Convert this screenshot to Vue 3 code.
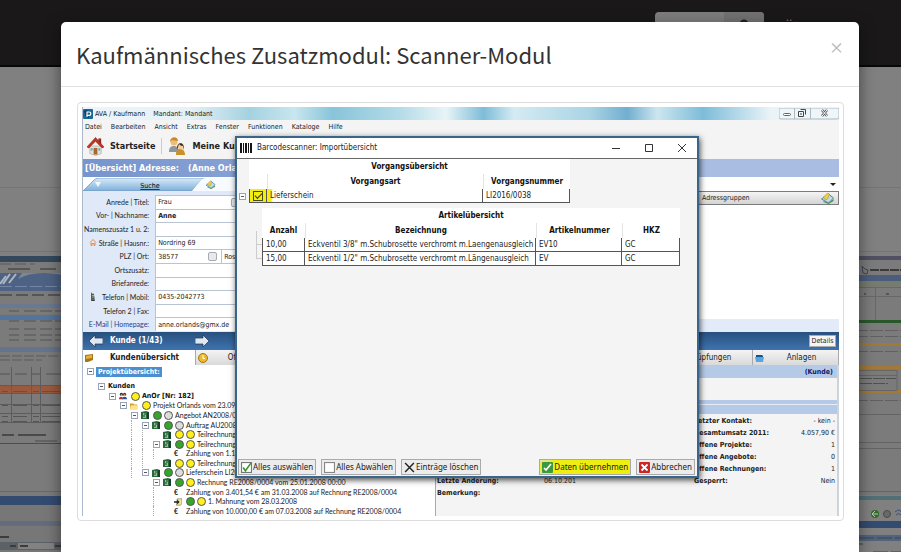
<script setup>
const menu = ['Datei', 'Bearbeiten', 'Ansicht', 'Extras', 'Fenster', 'Funktionen', 'Kataloge', 'Hilfe']

const fields = [
  { id: 'anrede', label: 'Anrede | Titel:', value: 'Frau', pick: true },
  { id: 'name', label: 'Vor- | Nachname:', value: 'Anne', strong: true },
  { id: 'zusatz', label: 'Namenszusatz 1 u. 2:', value: '' },
  { id: 'strasse', label: 'Straße | Hausnr.:', value: 'Nordring 69', icon: 'i-home' },
  { id: 'plz', label: 'PLZ | Ort:', value: '38577', city: 'Rosenheim' },
  { id: 'ort', label: 'Ortszusatz:', value: '' },
  { id: 'brief', label: 'Briefanrede:', value: '' },
  { id: 'tel', label: 'Telefon | Mobil:', value: '0435-2042773', icon: 'i-phone' },
  { id: 'tel2', label: 'Telefon 2 | Fax:', value: '' },
  { id: 'mail', label: 'E-Mail | Homepage:', value: 'anne.orlands@gmx.de', link: true },
]

const tree = [
  { level: 1, toggle: true, text: 'Kunden', bold: true, guides: [] },
  { level: 2, toggle: true, icon: 'i-people', dots: ['yellow'], text: 'AnOr [Nr: 182]', bold: true, guides: [] },
  { level: 3, toggle: true, icon: 'i-folder', dots: ['yellow'], text: 'Projekt Orlands vom 23.09.2008', guides: [] },
  { level: 4, toggle: true, icon: 'i-doc', dots: ['green', 'gray'], text: 'Angebot AN2008/0004', guides: [] },
  { level: 5, toggle: true, icon: 'i-doc', dots: ['green', 'gray'], text: 'Auftrag AU2008/0004', guides: [] },
  { level: 6, icon: 'i-doc', dots: ['yellow', 'yellow'], text: 'Teilrechnung', guides: [6] },
  { level: 6, toggle: true, icon: 'i-doc', dots: ['green', 'yellow'], text: 'Teilrechnung', guides: [6] },
  { level: 7, euro: true, text: 'Zahlung von 1.100,00 €', guides: [6, 7] },
  { level: 6, icon: 'i-doc', dots: ['yellow', 'yellow'], text: 'Teilrechnung', guides: [6] },
  { level: 5, toggle: true, icon: 'i-doc', dots: ['green', 'gray'], text: 'Lieferschein LI2008/0004', guides: [] },
  { level: 6, toggle: true, icon: 'i-doc', dots: ['green', 'yellow'], text: 'Rechnung RE2008/0004 vom 25.01.2008 00:00', guides: [] },
  { level: 7, euro: true, text: 'Zahlung von 3.401,54 € am 31.03.2008 auf Rechnung RE2008/0004', guides: [7] },
  { level: 7, icon: 'i-note', dots: ['green', 'yellow'], text: '1. Mahnung vom 28.03.2008', guides: [7] },
  { level: 7, euro: true, text: 'Zahlung von 10.000,00 € am 07.03.2008 auf Rechnung RE2008/0004', guides: [7] },
]
for (const row of tree) {
  if (row.level >= 5 && tree.indexOf(row) < 10) row.guides.push(5)
}

const facts = [
  ['Letzter Kontakt:', '- kein -'],
  ['Gesamtumsatz 2011:', '4.057,90 €'],
  ['Offene Projekte:', '1'],
  ['Offene Angebote:', '0'],
  ['Offene Rechnungen:', '1'],
  ['Gesperrt:', 'Nein'],
]

const articles = [
  ['10,00', 'Eckventil 3/8" m.Schubrosette verchromt m.Laengenausgleich', 'EV10', 'GC'],
  ['15,00', 'Eckventil 1/2" m.Schubrosette verchromt m.Längenausgleich', 'EV', 'GC'],
]

const leftFigures = [309, 319, 327, 333, 338]
const leftLines = [390, 404, 415, 420]
</script>

<template>
  <div class="page">
    <svg class="defs" aria-hidden="true">
      <symbol id="i-logo" viewBox="0 0 10 10">
        <rect width="10" height="10" rx="1" fill="#176a98" />
        <path d="M1 2l3-1 2 8-3-1z" fill="#0c3d63" />
        <path d="M4 8V3h2.2a1.6 1.6 0 0 1 0 3.300H4" fill="none" stroke="#fff" stroke-width="1.200" />
      </symbol>
      <symbol id="i-house" viewBox="0 0 18 20">
        <path d="M3 10h12v8l-6 2-6-2z" fill="#e9e4dc" stroke="#999" stroke-width=".6" />
        <path d="M12 2h3v6h-3z" fill="#8d3326" />
        <path d="M9 1L0 11l2 1 7-7 7 7 2-1z" fill="#c8321f" stroke="#7d1c12" stroke-width=".6" />
        <path d="M7 12h4v7H7z" fill="#a8672c" />
        <path d="M12 12h2v3h-2zM4 12h2v3H4z" fill="#7fa8c9" />
      </symbol>
      <symbol id="i-users" viewBox="0 0 18 18">
        <path d="M1 15c0-5 2-6 5-6s4 2 4 6z" fill="#8f979e" />
        <circle cx="6" cy="5" r="3.500" fill="#f0bd79" />
        <path d="M2 5c0-6 8-6 8-1-3 0-5-1-6-1z" fill="#c98b25" />
        <path d="M8 18c0-5 1-6 4-6s5 2 5 6z" fill="#c9902c" />
        <circle cx="12.500" cy="9" r="3.200" fill="#f4cf9e" />
        <path d="M9 13c-1-9 8-9 7 0l-1-4c-2 0-3-1-4-2z" fill="#3a2a1c" />
      </symbol>
      <symbol id="i-home" viewBox="0 0 8 8">
        <path d="M1 4l3-3 3 3M2 4v3h1V5h2v2h1V4" fill="none" stroke="#e58a4c" stroke-width="1" />
      </symbol>
      <symbol id="i-phone" viewBox="0 0 8 10">
        <path d="M2 0l1 2h2l1 8H2z" fill="#303c36" />
        <path d="M3 3h2v2H3z" fill="#a4cf8a" />
        <path d="M3 6h2M3 8h2" stroke="#ccc" stroke-width=".7" />
      </symbol>
      <symbol id="i-edit" viewBox="0 0 14 12">
        <path d="M1 7l7-5 5 4-5 5z" fill="#bedbe6" stroke="#4b8a9d" />
        <path d="M3 9l5 2 5-4v2l-5 3-5-2z" fill="#4e8b4c" />
        <path d="M3 5l4-4 2 1-2 5-2 1z" fill="#f3cb4a" stroke="#9d8a35" stroke-width=".5" />
      </symbol>
      <symbol id="i-people" viewBox="0 0 10 8">
        <circle cx="3" cy="2" r="2" fill="#342518" />
        <circle cx="7" cy="2" r="2" fill="#542f16" />
        <circle cx="3" cy="3" r="1.200" fill="#efae6c" />
        <circle cx="7" cy="3" r="1.200" fill="#efae6c" />
        <path d="M0 8c0-4 5-4 5 0z" fill="#c32d2a" />
        <path d="M4 8c0-4 6-4 6 0z" fill="#2b4e9d" />
      </symbol>
      <symbol id="i-folder" viewBox="0 0 10 8">
        <path d="M0 1h4l1 1h4v6H0z" fill="#cf9c2d" />
        <path d="M1 3h9l-1 5H0z" fill="#ffe48a" />
      </symbol>
      <symbol id="i-doc" viewBox="0 0 8 8">
        <path d="M0 1l5-1 3 1v7H0z" fill="#286a3c" />
        <path d="M2 2l3 0v5H2z" fill="#97bf8d" />
        <path d="M6 1h2v7H6z" fill="#183f2c" />
        <path d="M3 3h2M2 5h2" stroke="#17412a" />
      </symbol>
      <symbol id="i-note" viewBox="0 0 10 8">
        <path d="M4 0h6v6L8 8H3z" fill="#eee9a0" stroke="#675f36" stroke-width=".7" />
        <path d="M0 3h4V1l3 3-3 3V5H0z" fill="#222" />
      </symbol>
      <symbol id="i-arrow" viewBox="0 0 14 12">
        <path d="M0 6l6-6v3h8v6H6v3z" fill="#dfe7f0" stroke="#20334d" stroke-width=".7" />
      </symbol>
      <symbol id="i-bars" viewBox="0 0 13 10">
        <path d="M0 0h2v10H0zM3 0h1v10H3zM5 0h2v10H5zM8 0h1v10H8zM10 0h2v10h-2z" fill="#161616" />
      </symbol>
      <symbol id="i-tick" viewBox="0 0 10 10">
        <rect x=".5" y=".5" width="9" height="9" fill="#fff" stroke="#777" />
        <path d="M2 5l2 3 5-7" fill="none" stroke="#36932d" stroke-width="1.400" />
      </symbol>
      <symbol id="i-box" viewBox="0 0 10 10">
        <rect x=".5" y=".5" width="9" height="9" fill="#fff" stroke="#888" />
      </symbol>
      <symbol id="i-cross" viewBox="0 0 10 10">
        <path d="M1 1l8 8M9 1L1 9" stroke="#222" stroke-width="1.300" />
      </symbol>
      <symbol id="i-ok" viewBox="0 0 11 11">
        <rect width="11" height="11" rx="1" fill="#3d9a3c" />
        <path d="M2 6l2 2 5-6" fill="none" stroke="#fff" stroke-width="1.700" />
      </symbol>
      <symbol id="i-stop" viewBox="0 0 11 11">
        <rect width="11" height="11" rx="1" fill="#cf2323" />
        <path d="M2.500 2.500l6 6M8.500 2.500l-6 6" stroke="#fff" stroke-width="1.800" />
      </symbol>
    </svg>

    <div class="backdrop" aria-hidden="true">
      <div class="navbar">
        <span class="search"><span class="search-go"></span></span>
        <span class="lang">Über</span>
      </div>
      <div class="shots">
        <svg class="shot" width="80" height="486" viewBox="0 66 80 486">
          <path d="M0 186.500h80M0 250.500h80" stroke="#747474" />
          <rect y="255" width="80" height="240" fill="#7b7b7b" />
          <rect y="255" width="80" height="6" fill="#34485c" />
          <path d="M0 263h35" stroke="#5a5a5a" stroke-dasharray="11 4" />
          <path d="M8 268h22M40 268h16" stroke="#565656" stroke-width="2" />
          <rect y="272" width="80" height="18" fill="#4d6284" />
          <path d="M18 278q20-12 62 0v-6H22z" fill="#7e8791" />
          <path d="M0 283l6-8M3 283l7-10M9 282l7-9" stroke="#b0b6c0" stroke-width="2" />
          <path d="M0 285.500h80" stroke="#7486a5" stroke-dasharray="12 3" />
          <path d="M0 294h61" stroke="#555" stroke-width="2" stroke-dasharray="12 4" />
          <rect y="303" width="80" height="4" fill="#697991" />
          <rect y="314" width="80" height="5" fill="#53749c" />
          <g v-for="y in leftFigures" :key="y" stroke="#555">
            <path :d="`M9 ${y + 1}h10M24 ${y + 1}h12M40 ${y + 1}h12M55 ${y + 1}h6`" />
          </g>
          <rect y="346" width="80" height="5" fill="#64748c" />
          <path d="M0 355h61M0 359h42" stroke="#5c5c5c" stroke-dasharray="10 2" />
          <path d="M0 373h10M15 373h12M32 373h8M46 373h15" stroke="#555" />
          <rect y="384" width="61" height="8" fill="#9b5a3e" />
          <path d="M0 384.500h61M0 392.500h61M0 403.500h61M0 412.500h61M0 421.500h61M11.500 366v56M31.500 366v56M40.500 366v56" stroke="#5c5c5c" />
          <g v-for="y in leftLines" :key="y" stroke="#555">
            <path :d="`M2 ${y + .5}h6M13 ${y + .5}h14M33 ${y + .5}h6M42 ${y + .5}h18`" />
          </g>
          <path d="M2 434h12M18 434h28" stroke="#4a4a4a" stroke-width="2" />
          <path d="M0 442.500h61M35 440h22" stroke="#4b4f43" />
          <path d="M0 490.500h80M0 513.500h80" stroke="#606a78" />
          <rect y="495" width="80" height="9" fill="#344b70" />
          <rect y="504" width="80" height="48" fill="#777" />
          <rect y="520" width="80" height="5" fill="#626c7c" />
          <rect y="541" width="80" height="8" fill="#5c6067" />
          <rect x="18" y="542" width="36" height="6" fill="#828282" />
          <path d="M0 536h9M10 545h6M20 545h8M55 545h6" stroke="#3c3c3c" stroke-width="2" />
        </svg>
        <svg class="shot" width="61" height="486" viewBox="840 66 61 486">
          <path d="M840 186.500h61M840 250.500h61" stroke="#747474" />
          <rect x="840" y="255" width="61" height="239" fill="#7b7b7b" />
          <rect x="840" y="255" width="61" height="4" fill="#514f62" />
          <path d="M862 265l3 3 3 1-1 4-4-1z" fill="none" stroke="#3c4854" />
          <path d="M870 269h31" stroke="#3a3a3a" stroke-width="2" stroke-dasharray="9 1" />
          <rect x="840" y="274" width="61" height="6" fill="#4c5d7c" />
          <rect x="840" y="280" width="61" height="6" fill="#777b70" />
          <path d="M840 286.500h61M840 295.500h61M875.500 287v32" stroke="#686868" />
          <path d="M864 293h2M886 293h3" stroke="#333" />
          <rect x="840" y="319" width="61" height="3" fill="#28572a" />
          <path d="M840 329.500h61M840 335.500h61M840 350.500h61M840 399.500h61" stroke="#606060" stroke-dasharray="13 2" />
          <path d="M840 343.500h61M840 366.500h61M840 390.500h61" stroke="#a27936" stroke-width="3" />
          <path d="M840 369.500h57v20h-57M840 374.500h57" fill="none" stroke="#666" />
          <path d="M860 377.500h36M860 382.500h28" stroke="#505050" stroke-dasharray="12 1" />
          <path d="M840 413.500h61M840 441.500h61M840 447.500h61M840 490.500h61" stroke="#646464" />
          <rect x="840" y="495" width="61" height="4" fill="#526f76" />
          <circle cx="875" cy="513" r="4" fill="#356a2c" />
          <path d="M872 513h6M875 510l-3 3 3 3" fill="none" stroke="#bcc9b8" />
          <circle cx="887" cy="513" r="3.500" fill="#696969" stroke="#4a4a4a" />
          <path d="M895 511q5-4 6 0M896 514q3-3 5 0" fill="none" stroke="#31557a" />
          <rect x="840" y="520" width="61" height="7" fill="#344b70" />
          <rect x="840" y="534" width="61" height="6" fill="#53637c" />
          <path d="M859 537h42M859 543h4M873 551h28" stroke="#3a4659" stroke-dasharray="15 3" />
        </svg>
      </div>
    </div>

    <section class="modal" role="dialog" aria-labelledby="modal-title">
      <header class="modal-head">
        <h4 id="modal-title">Kaufmännisches Zusatzmodul: Scanner-Modul</h4>
        <button class="close" type="button" aria-label="Schließen">×</button>
      </header>
      <div class="modal-body">
        <div class="thumb">
          <div class="app">
            <div class="app-title">
              <svg class="s10"><use href="#i-logo" /></svg>
              <span>AVA / Kaufmann</span>
              <span class="client">Mandant: Mandant</span>
              <span class="winctl">
                <svg width="60" height="12" viewBox="0 0 60 12">
                  <path d="M0 0h60v9q0 2-2 2H2q-2 0-2-2z" fill="#eef6fa" stroke="#aab9c4" />
                  <path d="M15.500 0v11M31.500 0v11" stroke="#aab9c4" />
                  <rect x="4.500" y="5.500" width="7" height="2" rx="1" fill="#fff" stroke="#666" />
                  <path d="M21.500 1.500h5v5M19.500 3.500h5v5h-5zM21 6h2" fill="none" stroke="#444" />
                  <path d="M43 2l5 6M48 2l-5 6" stroke="#555" stroke-width="2.500" />
                  <path d="M43 2l5 6M48 2l-5 6" stroke="#fff" />
                </svg>
              </span>
            </div>
            <nav class="app-menu">
              <a v-for="item in menu" :key="item" href="#">{{ item }}</a>
            </nav>
            <div class="app-tools">
              <svg width="17" height="20"><use href="#i-house" /></svg>
              <span>Startseite</span>
              <i></i>
              <svg width="18" height="18"><use href="#i-users" /></svg>
              <span>Meine Kunden</span>
            </div>
            <div class="app-caption">
              <span>[Übersicht] Adresse:</span>
              <span>(Anne Orlands)</span>
            </div>
            <div class="app-tabs">
              <svg class="tabshape" width="160" height="13" viewBox="0 0 160 13">
                <defs>
                  <linearGradient id="tabfill" x2="0" y2="1">
                    <stop offset="0" stop-color="#d8ebfa" />
                    <stop offset="1" stop-color="#7eafd9" />
                  </linearGradient>
                </defs>
                <path d="M0 13L11 2q2-2 5-2h107q-4 0-6 3l-8 10z" fill="url(#tabfill)" stroke="#6a8fb5" stroke-width=".7" />
                <path d="M109 13l8-10q2-3 6-3h37v13z" fill="#f7fbff" />
                <path d="M12 4l6 0-3 5z" fill="#f3f9ff" />
                <text x="67" y="10" text-anchor="middle" class="tabtext">Suche</text>
                <use href="#i-edit" x="122" y="2" width="11" height="9" />
              </svg>
              <span class="caret"></span>
            </div>
            <div class="address">
              <form class="fields" @submit.prevent>
                <div v-for="f in fields" :key="f.id" class="field">
                  <svg v-if="f.icon" class="s8"><use :href="'#' + f.icon" /></svg>
                  <label :for="f.id" :class="{ link: f.link }">{{ f.label }}</label>
                  <div class="entry">
                    <input :id="f.id" type="text" :value="f.value" :class="{ strong: f.strong, short: f.city, mid: f.pick }" />
                    <button v-if="f.city || f.pick" class="pick" type="button" aria-label="Auswählen"></button>
                    <input v-if="f.city" class="city" type="text" :value="f.city" aria-label="Ort" />
                  </div>
                </div>
              </form>
              <aside class="groups">
                <header>
                  <span>Adressgruppen</span>
                  <svg width="15" height="12"><use href="#i-edit" /></svg>
                </header>
                <div class="groups-list"></div>
                <div class="groups-foot"></div>
              </aside>
            </div>
            <div class="record">
              <svg width="14" height="12"><use href="#i-arrow" /></svg>
              <strong>Kunde (1/43)</strong>
              <svg class="next" width="14" height="12"><use href="#i-arrow" /></svg>
              <button type="button">Details</button>
            </div>
            <div class="tabs">
              <div class="tab on">
                <svg width="9" height="8"><path d="M0 1l8-1v6L3 8H0z" fill="#a87616" /><path d="M1 2l6-1v3l-6 1z" fill="#e1b13c" /></svg>
                <span>Kundenübersicht</span>
              </div>
              <div class="tab">
                <svg width="10" height="10"><circle cx="5" cy="5" r="4.500" fill="#efb92a" stroke="#a17812" /><path d="M5 2v3.500h2" fill="none" stroke="#fff" /></svg>
                <span>Offene Vorgänge</span>
              </div>
              <div class="tab links"><span>Verknüpfungen</span></div>
              <div class="tab files">
                <svg width="10" height="8"><path d="M1 1h6l1 1v5H1z" fill="#17518a" /><path d="M0 3l9 0-1 5H1z" fill="#58a6e0" /></svg>
                <span>Anlagen</span>
              </div>
            </div>
            <div class="overview">
              <div class="tree">
                <div class="tree-root"><i class="toggle"></i><b>Projektübersicht:</b></div>
                <div class="tree-rows">
                  <div v-for="(row, i) in tree" :key="i" class="node" :class="{ bold: row.bold }">
                    <i v-for="n in row.level" :key="n" class="step" :class="{ line: row.guides.includes(n) }"></i>
                    <i class="toggle" :class="{ none: !row.toggle }"></i>
                    <svg v-if="row.icon" class="nodeicon"><use :href="'#' + row.icon" /></svg>
                    <span v-if="row.euro" class="euro">€</span>
                    <i v-for="(d, k) in row.dots || []" :key="k" class="dot" :class="d"></i>
                    <span>{{ row.text }}</span>
                  </div>
                </div>
              </div>
              <div class="summary">
                <div class="band top">(Kunde)</div>
                <div class="band low"></div>
                <div class="summary-grid">
                  <dl class="notes">
                    <dt>Letzte Änderung:</dt><dd>06.10.201</dd>
                    <dt>Bemerkung:</dt><dd></dd>
                  </dl>
                  <dl class="facts">
                    <template v-for="f in facts" :key="f[0]">
                      <dt>{{ f[0] }}</dt><dd>{{ f[1] }}</dd>
                    </template>
                  </dl>
                </div>
              </div>
            </div>

            <div class="dialog" role="dialog" aria-label="Barcodescanner: Importübersicht">
              <header class="dlg-title">
                <svg width="13" height="10"><use href="#i-bars" /></svg>
                <span>Barcodescanner: Importübersicht</span>
                <svg class="dlg-ctl" width="76" height="10" viewBox="0 0 76 10">
                  <path d="M0 5.500h8M33.500 1.500h7v7h-7zM66 1l8 8M74 1l-8 8" fill="none" stroke="#333" />
                </svg>
              </header>
              <div class="dlg-body">
                <table class="jobs">
                  <colgroup><col class="c-mark" /><col class="c-kind" /><col class="c-no" /></colgroup>
                  <thead>
                    <tr><th colspan="3">Vorgangsübersicht</th></tr>
                    <tr class="cols"><th></th><th>Vorgangsart</th><th>Vorgangsnummer</th></tr>
                  </thead>
                  <tbody>
                    <tr>
                      <td class="mark"><i class="toggle outer"></i><input type="checkbox" checked aria-label="Lieferschein auswählen" /></td>
                      <td class="kind">Lieferschein</td>
                      <td>LI2016/0038</td>
                    </tr>
                  </tbody>
                </table>
                <div class="nested">
                  <div class="branch"><i></i><i></i></div>
                  <table class="items">
                    <colgroup><col class="c-qty" /><col class="c-name" /><col class="c-art" /><col class="c-hkz" /></colgroup>
                    <thead>
                      <tr><th colspan="4">Artikelübersicht</th></tr>
                      <tr class="cols"><th>Anzahl</th><th>Bezeichnung</th><th>Artikelnummer</th><th>HKZ</th></tr>
                    </thead>
                    <tbody>
                      <tr v-for="a in articles" :key="a[2]"><td v-for="c in a" :key="c">{{ c }}</td></tr>
                    </tbody>
                  </table>
                </div>
              </div>
              <footer class="dlg-foot">
                <button type="button"><svg class="s11"><use href="#i-tick" /></svg>Alles auswählen</button>
                <button type="button"><svg class="s11"><use href="#i-box" /></svg>Alles Abwählen</button>
                <button type="button"><svg class="s11"><use href="#i-cross" /></svg>Einträge löschen</button>
                <button type="button" class="apply"><svg class="s11"><use href="#i-ok" /></svg><span>Daten übernehmen</span></button>
                <button type="button"><svg class="s11"><use href="#i-stop" /></svg>Abbrechen</button>
              </footer>
            </div>
          </div>
        </div>
      </div>
    </section>
  </div>
</template>

<style>
body { background: #808080; overflow: hidden; }
</style>

<style scoped>
* { box-sizing: border-box; }
.page {
  position: relative;
  display: flex;
  min-height: 100vh;
  padding: 22px 42px 0 61px;
  font-family: "DejaVu Sans Condensed", "DejaVu Sans", sans-serif;
  font-size: 7px;
  line-height: 10px;
  color: #222;
}
.page svg { display: block; flex: none; }
.page .defs { position: absolute; width: 0; height: 0; }
button, input { font: inherit; color: inherit; margin: 0; }
button { padding: 0; }
.s8 { width: 8px; height: 9px; }
.s10 { width: 10px; height: 10px; }
.s11 { width: 11px; height: 11px; }

.backdrop { position: absolute; inset: 0; overflow: hidden; background: #808080; }
.navbar {
  display: flex;
  justify-content: flex-end;
  gap: 20px;
  height: 67px;
  padding: 12px 92px 0 0;
  background: #1a1818;
  border-bottom: 2px solid #080808;
}
.search { display: flex; justify-content: flex-end; width: 109px; height: 34px; border-radius: 4px; background: #7d7d7d; overflow: hidden; }
.search-go { width: 40px; background: radial-gradient(circle at 20px 12px, #222 4px, #727272 5px); }
.lang { width: 25px; padding-top: 5px; font: 14px/20px "Noto Sans CJK SC", sans-serif; color: #8a6c84; }
.shots { display: flex; justify-content: space-between; }

.modal {
  position: relative;
  flex: 1;
  min-width: 0;
  background: #fff;
  border-radius: 5px 5px 0 0;
  box-shadow: 0 5px 15px rgba(0, 0, 0, .5);
}
.modal-head {
  display: flex;
  justify-content: space-between;
  align-items: flex-start;
  padding: 15px;
  border-bottom: 1px solid #e2e2e2;
}
h4 { margin: 0; font: 400 22px/34px "Noto Sans CJK SC", sans-serif; color: #333; }
.close { border: 0; background: none; font: 500 15px/20px "Noto Sans CJK SC", sans-serif; color: #bbb; }
.modal-body { padding: 15px 15px 30px 16px; }
.thumb { padding: 4px; border: 1px solid #ddd; border-radius: 4px; }
.app { position: relative; display: flex; flex-direction: column; border-left: 1px solid #a9b8cb; background: #f4f4f5; white-space: nowrap; }

.app-title {
  display: flex;
  gap: 2px;
  align-items: center;
  height: 13px;
  background: linear-gradient(90deg, #eef5f8 0, #e6f1f6 14%, #a4d2e0 22%, #c8e6ee 28%, #88c4da 33%, #b5dbe8 42%, #e8f4f7 48%, #7ebcd8 53%, #d4ebf2 57%, #aad4e5 67%, #72aed0 72%, #cce6ef 76%, #7dbcd9 82%, #eaf4f8 91%);
}
.client { padding-left: 6px; }
.winctl { margin-left: auto; }
.app-menu { display: flex; gap: 9px; height: 16px; padding: 2px; }
.app-menu a { color: #222; text-decoration: none; }
.app-tools { display: flex; align-items: center; gap: 6px; height: 23px; padding: 0 0 3px 4px; font-size: 9px; font-weight: 700; }
.app-tools i { width: 1px; height: 16px; background: #ccc; }
.app-caption {
  display: flex;
  align-items: center;
  gap: 9px;
  height: 18px;
  padding-left: 2px;
  background: linear-gradient(90deg, #7795cd, #a9bde2 70%);
  color: #fff;
  font-size: 9px;
  font-weight: 700;
}
.app-tabs { display: flex; justify-content: space-between; align-items: flex-end; height: 14px; background: #fff; }
.tabtext { font-size: 7px; text-decoration: underline; }
.caret { margin: 0 3px 5px 0; border: 3px solid transparent; border-top-color: #222; border-bottom: 0; }

.address { display: flex; justify-content: space-between; height: 141px; background: #dfe9f7; }
.fields { display: grid; grid-auto-rows: 1fr; width: 200px; padding: 4px 0 1px; }
.field { display: flex; align-items: center; min-height: 0; padding-left: 1px; }
.field .s8 { margin-left: 5px; }
.field label { flex: 1; text-align: right; padding-right: 6px; font-family: Lato, sans-serif; }
.field .link { color: #2c3c8c; }
.entry { display: flex; align-items: center; width: 128px; height: 100%; border: 1px solid #b9c4d2; border-width: 1px 0 0 1px; background: #fff; }
.entry input { flex: 1; height: 100%; min-width: 0; padding: 0 2px; border: 0; background: none; }
.entry .strong { font-weight: 700; }
.entry .short { flex: 0 0 52px; }
.entry .mid { flex: 0 0 75px; }
.pick { width: 9px; height: 9px; border: 1px solid #a5acb5; border-radius: 2px; background: #e9e9e9; }
.entry .city { margin-left: 4px; border-left: 1px solid #b9c4d2; }
.groups { display: flex; flex-direction: column; width: 143px; background: #fff; }
.groups header { display: flex; justify-content: space-between; align-items: center; height: 14px; padding: 0 3px 0 5px; background: linear-gradient(#f4f4f4, #d4d4d4); border: 1px solid #7b7b7b; }
.groups-list { flex: 1; }
.groups-foot { height: 13px; background: #e3ebf8; }

.record { display: flex; align-items: center; gap: 7px; height: 18px; padding: 0 3px 0 6px; background: linear-gradient(#28507f, #3f73ae); color: #fff; }
.record strong { width: 78px; font-size: 8px; }
.next { transform: scaleX(-1); }
.record button { margin-left: auto; width: 27px; height: 12px; border: 1px solid #aaa; background: #f5f5f5; color: #222; }

.tabs { display: flex; height: 15px; background: linear-gradient(#f4f4f4, #d9d9d9); font-size: 8px; }
.tab { display: flex; align-items: center; gap: 2px; width: 113px; padding: 0 2px; border-right: 1px solid #aaa; }
.tab span { flex: 1; text-align: center; }
.tab.on { background: #fff; font-weight: 700; }
.tab.links { margin-left: auto; width: 97px; }
.tab.files { width: 86px; }

.overview { display: flex; height: 151px; background: #fff; }
.tree { width: 352px; overflow: hidden; display: flex; flex-direction: column; }
.tree-root { display: flex; align-items: center; gap: 2px; height: 17px; padding: 0 4px 4px; }
.tree-root b { padding: 0 2px; background: #4a8fd0; color: #fff; }
.tree-rows { flex: 1; display: grid; grid-auto-rows: 1fr; padding-left: 4px; }
.node { display: flex; align-items: center; min-height: 0; line-height: 9px; color: #222; font-family: Lato, sans-serif; }
.node.bold { font-family: inherit; font-weight: 700; color: #111; }
.step { width: 11px; align-self: stretch; flex: none; }
.step.line { border-left: 1px dotted #aaa; }
.toggle {
  flex: none;
  width: 7px;
  height: 7px;
  border: 1px solid #9aa3b5;
  background: linear-gradient(#556, #556) center / 3px 1px no-repeat #fff;
}
.toggle.none { visibility: hidden; }
.node > .toggle { margin-right: 3px; }
.page .nodeicon { width: 8px; height: 8px; margin-right: 4px; }
.euro { width: 12px; font-weight: 700; text-align: left; }
.dot { flex: none; width: 9px; height: 9px; margin-right: 2px; border: 1px solid #555; border-radius: 50%; }
.dot.yellow { background: #fdf01c; }
.dot.green { background: #36a52c; }
.dot.gray { background: #ddd; }

.summary { flex: 1; display: flex; flex-direction: column; border-left: 1px solid #aaa; border-right: 2px solid #cdd3dc; background: #f4f4f5; }
.band { background: #b4cae6; }
.band.top { height: 13px; padding: 2px 4px 0 0; text-align: right; font-weight: 700; color: #16166c; }
.band.low { height: 14px; margin-top: 22px; background: linear-gradient(#b4cae6 4px, #e8eef7 4px, #e8eef7 5px, #b4cae6 5px); }
.summary-grid { display: flex; justify-content: space-between; align-items: flex-end; padding: 1px 2px 0 1px; }
.notes, .facts { display: grid; grid-auto-rows: 12px; line-height: 12px; margin: 0; }
.notes { grid-template-columns: 107px auto; height: 0; align-self: flex-end; overflow: visible; margin-bottom: 12px; }
.facts { grid-template-columns: auto auto; width: 141px; }
dt { font-weight: 700; }
dd { margin: 0; }
.facts dd { text-align: right; }

.dialog {
  position: absolute;
  top: 29px;
  right: 140px;
  bottom: 38px;
  left: 152px;
  display: flex;
  flex-direction: column;
  border: 2px solid #39658b;
  background: #f4f4f4;
  box-shadow: 1px 2px 6px rgba(0, 0, 0, .7);
  font-size: 8px;
}
.dlg-title { display: flex; align-items: center; gap: 4px; height: 21px; padding: 0 9px 0 3px; background: #fff; border-bottom: 1px solid #666; }
.dlg-ctl { margin-left: auto; }
.dlg-body { flex: 1; padding: 0 0 0 12px; }
table { border-collapse: separate; border-spacing: 0; table-layout: fixed; background: #fff; }
th, td { padding: 0 3px; line-height: 12px; }
th { height: 15px; font-weight: 700; color: #111; }
td { height: 14px; text-align: left; border: 1px solid #555; border-width: 0 1px 1px 0; }
td:first-child { border-left-width: 1px; }
.cols th + th { border-left: 1px solid #e4e4e4; }
.jobs { width: 321px; }
.c-mark { width: 18px; }
.c-no { width: 87px; }
.jobs .mark { position: relative; padding: 0; background: #f3ee10; }
.jobs .kind { background: linear-gradient(90deg, #f3ee10 4px, #fff 6px); }
.outer { position: absolute; left: -11px; top: 4px; }
.mark input { position: relative; appearance: none; display: block; width: 10px; height: 10px; margin: 0 auto; border: 1px solid #4a4a10; }
.mark input::before { content: ""; position: absolute; left: 1px; top: 1px; width: 6px; height: 3px; border: 1px solid #333; border-width: 0 0 1px 1px; transform: rotate(-45deg); }
.nested { display: flex; margin-top: 5px; }
.branch { width: 13px; padding: 0 0 7px 7px; display: flex; flex-direction: column; justify-content: flex-end; }
.branch i { height: 14px; border: 1px solid #ccc; border-width: 0 0 1px 1px; }
.items { width: 418px; }
.c-qty { width: 43px; }
.c-name { width: 231px; }
.c-art { width: 86px; }
.dlg-foot { display: flex; gap: 5px; padding: 1px 2px 1px 1px; }
.dlg-foot button { display: flex; align-items: center; gap: 1px; height: 16px; padding: 0 2px; border: 1px solid #aaa; background: #ececec; font-family: "Noto Sans", sans-serif; white-space: nowrap; }
.dlg-foot .apply { margin-left: auto; background: radial-gradient(ellipse 56px 11px at 52px 7px, #eeee10 90%, #e4e48a); }
</style>
